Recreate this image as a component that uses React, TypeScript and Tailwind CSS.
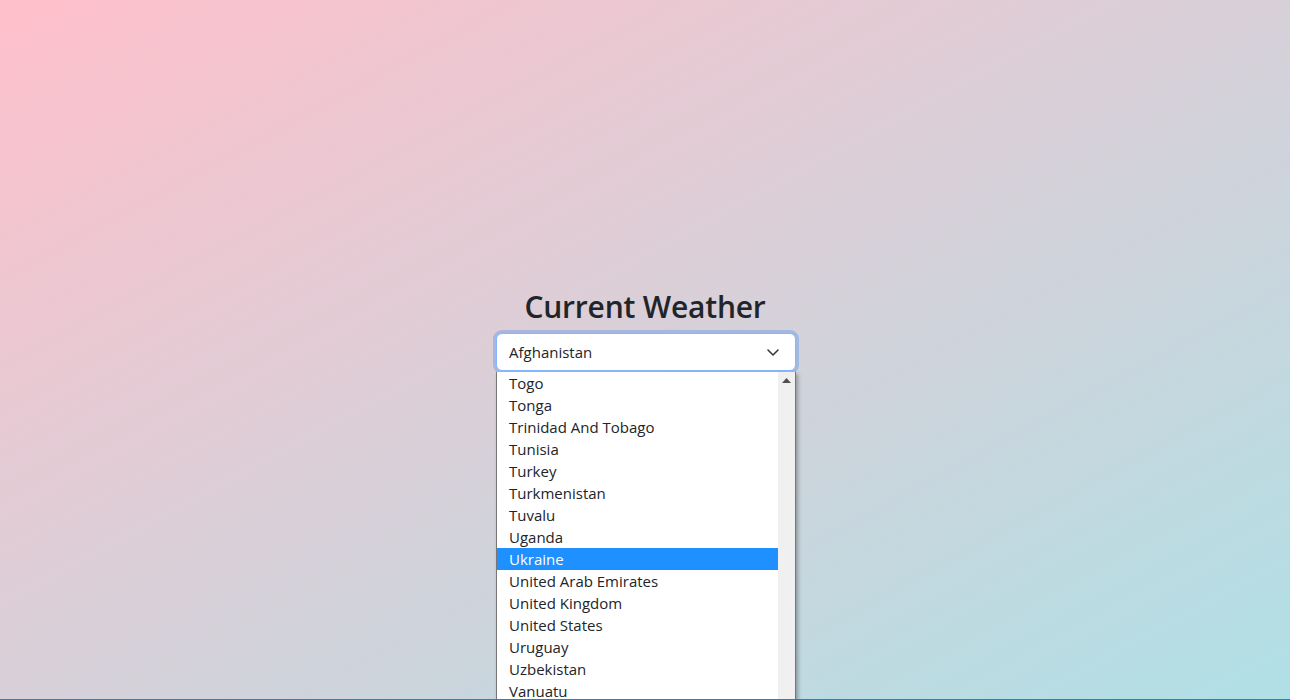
import React from "react";

const items = [
  "Togo",
  "Tonga",
  "Trinidad And Tobago",
  "Tunisia",
  "Turkey",
  "Turkmenistan",
  "Tuvalu",
  "Uganda",
  "Ukraine",
  "United Arab Emirates",
  "United Kingdom",
  "United States",
  "Uruguay",
  "Uzbekistan",
  "Vanuatu",
];

export default function App() {
  return (
    <div
      className="w-[1290px] h-[700px] overflow-hidden flex flex-col"
      style={{ fontFamily: '"Open Sans", "Noto Sans", sans-serif' }}
    >
      <div className="flex-1 min-h-0 overflow-hidden bg-[linear-gradient(to_bottom_right,#ffc0cb,#b0e0e6)] flex flex-col items-center pt-[288px]">
        <h2 className="text-[30px] leading-[38px] font-semibold text-[#212529] m-0 tracking-[-0.2px]">
          Current Weather
        </h2>
        <div className="mt-[7px] ml-[2px] w-[300px]">
          <div className="h-[38px] rounded-[6px] bg-white border border-[#86b7fe] shadow-[0_0_0_3px_rgba(13,110,253,0.25)] flex items-center pl-[12px] pr-[14px] text-[15px] text-[#212529]">
            <span className="flex-1">Afghanistan</span>
            <svg width="16" height="16" viewBox="0 0 16 16" className="mt-[-1px]">
              <path d="M3 6l5 5 5-5" fill="none" stroke="#343a40" strokeWidth="1.6" strokeLinecap="round" strokeLinejoin="round" />
            </svg>
          </div>
          <div className="mt-[1px] w-[300px] bg-white border-x border-[#767676] shadow-[2px_2px_4px_rgba(0,0,0,0.3)] flex">
            <div className="flex-1 flex flex-col">
              {items.map((it) => (
                <div
                  key={it}
                  className={
                    "h-[22px] leading-[22px] pl-[12px] text-[15px] " +
                    (it === "Ukraine" ? "bg-[#1e90ff] text-white" : "text-[#212529]")
                  }
                >
                  {it}
                </div>
              ))}
            </div>
            <div className="w-[17px] bg-[#f0f0f0] flex flex-col items-center pt-[6px]">
              <svg width="9" height="5" viewBox="0 0 9 5">
                <path d="M0 5L4.5 0L9 5Z" fill="#505050" />
              </svg>
            </div>
          </div>
        </div>
      </div>
      <div className="h-[1px] bg-[#2f7ec4]" />
    </div>
  );
}
